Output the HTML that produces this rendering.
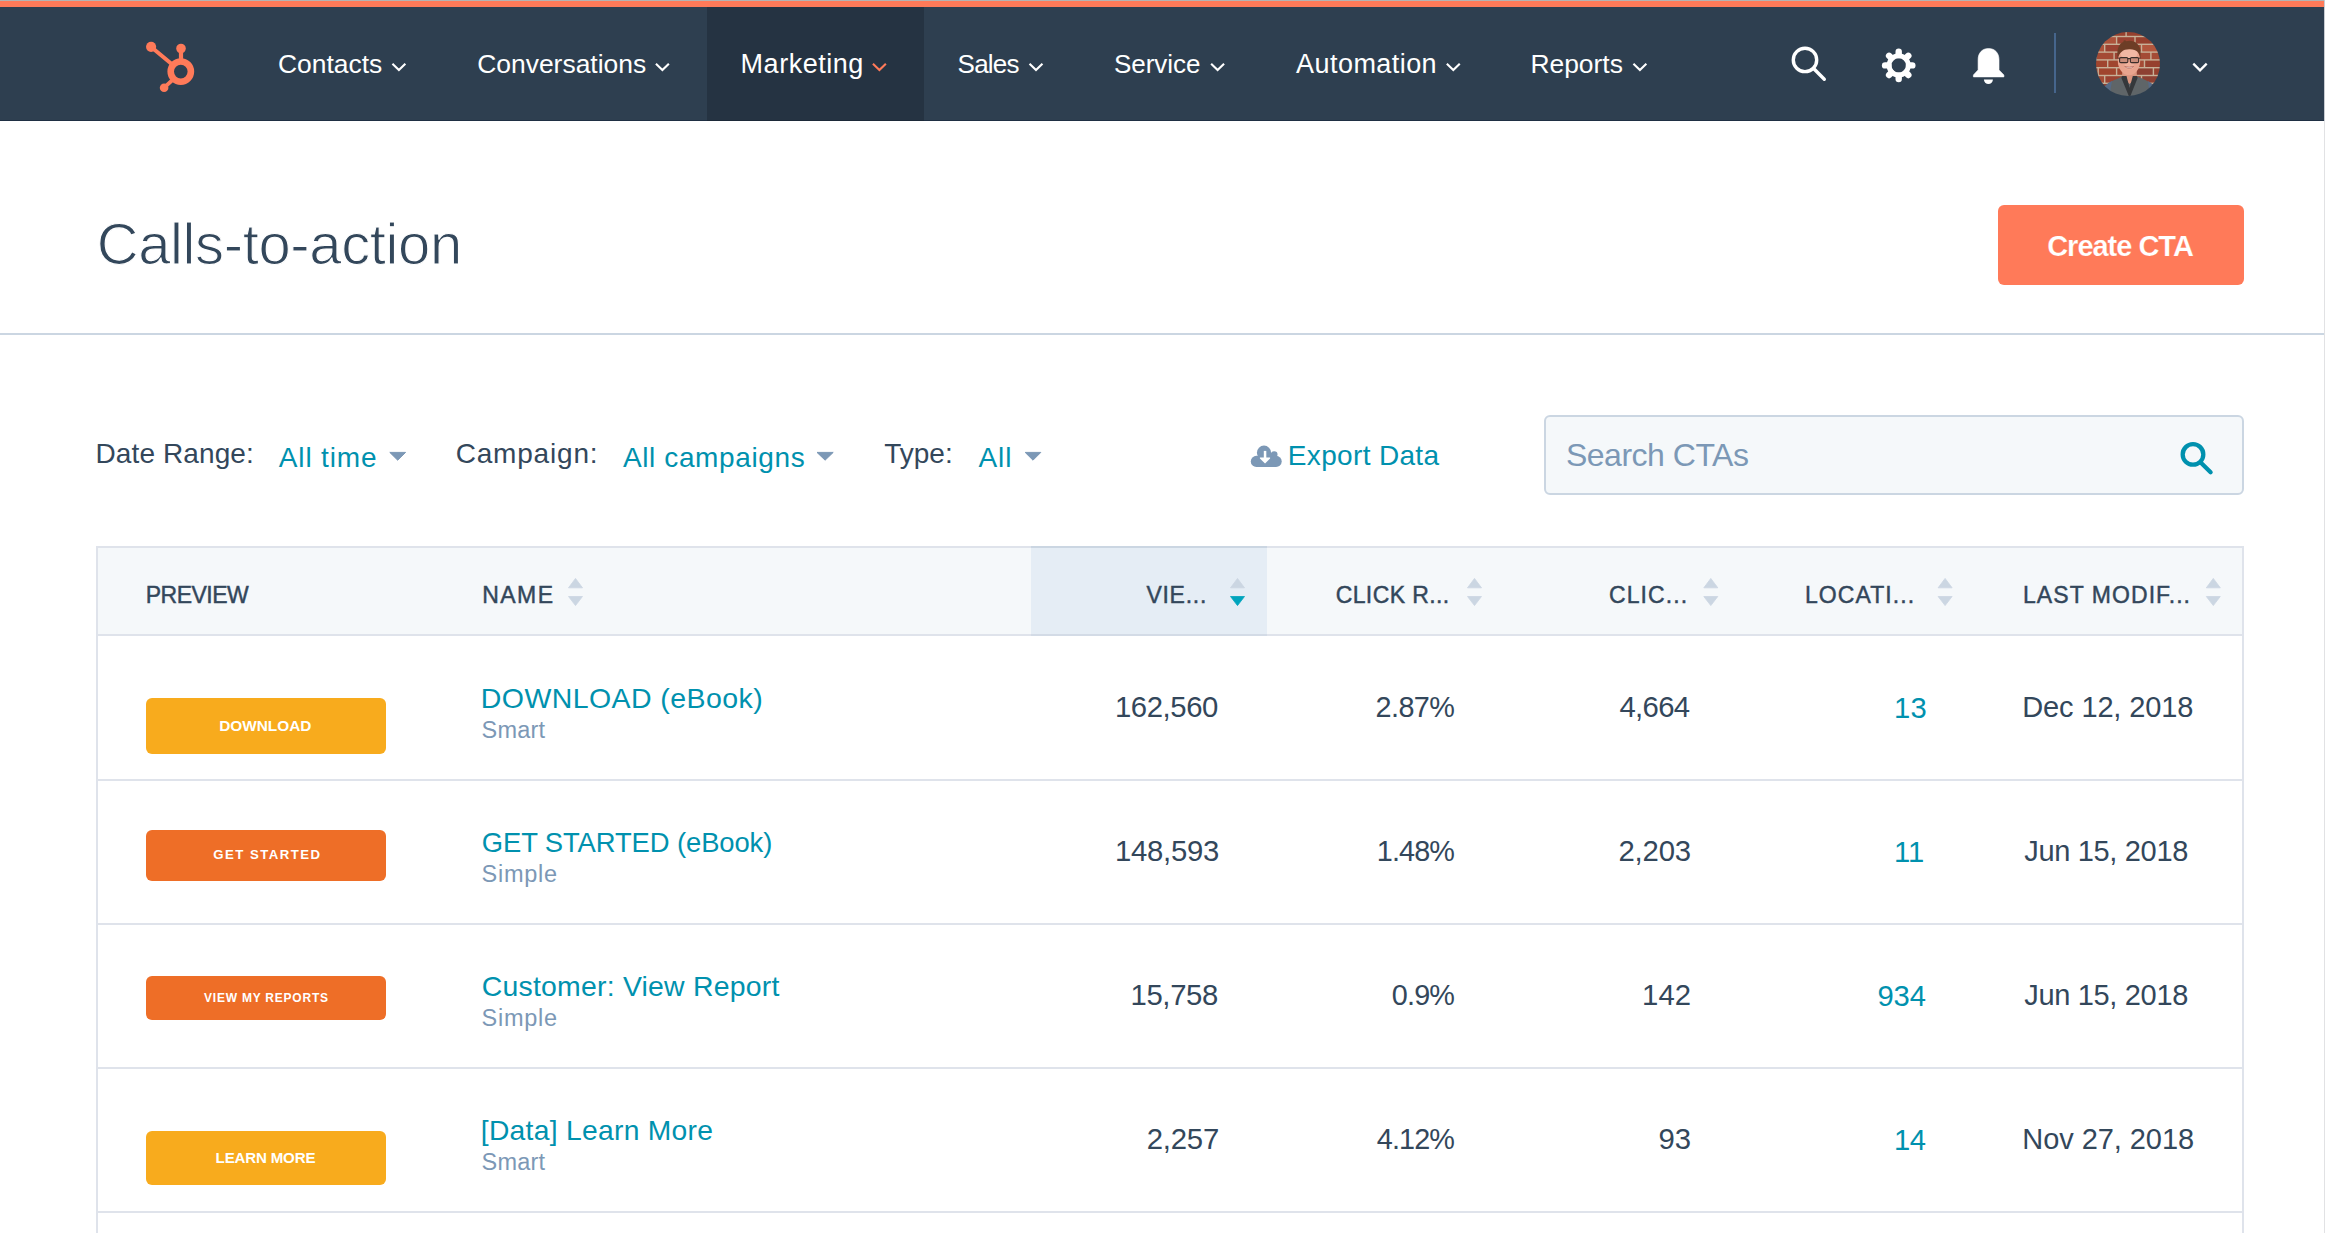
<!DOCTYPE html>
<html lang="en">
<head>
<meta charset="utf-8">
<title>Calls-to-action</title>
<style>
  html, body { margin: 0; padding: 0; }
  html { width: 2325px; height: 1233px; overflow: hidden; background: #ffffff; }
  body { width: 2325px; height: 1233px; overflow: hidden; background: #ffffff; position: relative;
         font-family: "Liberation Sans", sans-serif; color: #33475b; }
  .abs, .t, svg.ic { position: absolute; }
  .t { white-space: nowrap; line-height: 1; font-family: "Liberation Sans", sans-serif; }
  svg.ic { left: 0; top: 0; overflow: visible; pointer-events: none; }
  .topline { left: 0; top: 0; width: 2324px; height: 1px; background: #b4b4b4; }
  .accent { left: 0; top: 1px; width: 2324px; height: 6px; background: #ff7a59; }
  nav { position: absolute; left: 0; top: 7px; width: 2324px; height: 114px; background: #2e3f50; box-shadow: inset 0 -1px 0 #1f2f43; }
  nav .active { position: absolute; left: 707px; top: 0; width: 217px; height: 114px; background: #253342; box-shadow: inset 0 -1px 0 #1c2938; }
  .edge1 { left: 2324px; top: 0; width: 1px; height: 1233px; background: linear-gradient(#c8ccd2 0, #c8ccd2 121px, #e1e2e4 121px); }
  .hrule { left: 0; top: 333px; width: 2324px; height: 2px; background: #cbd6e2; }
  .btn-primary { left: 1998px; top: 205px; width: 246px; height: 80px; border-radius: 6px; background: #ff7a59; }
  .search { left: 1544px; top: 415px; width: 700px; height: 80px; box-sizing: border-box;
            border: 2px solid #cbd6e2; border-radius: 6px; background: #f5f8fa; }
  .table { left: 96px; top: 546px; width: 2148px; height: 687px; box-sizing: border-box;
           border: 2px solid #dfe3eb; border-bottom: 0; background: #ffffff; }
  .thead { left: 98px; top: 548px; width: 2144px; height: 86px; background: #f5f8fa; }
  .thead-sorted { left: 1031px; top: 548px; width: 236px; height: 86px; background: #e5edf5; }
  .thead-sorted-top { left: 1031px; top: 546px; width: 236px; height: 2px; background: #cbd6e2; }
  .thead-sorted-bottom { left: 1031px; top: 634px; width: 236px; height: 2px; background: #d3dbe6; z-index: 2; }
  .rowline { left: 98px; width: 2144px; height: 2px; background: #dfe3eb; }
  .cta { left: 146px; width: 240px; border-radius: 6px; }
  .cta.y { background: #f8ab1d; }
  .cta.o { background: #ee6e27; }
</style>
</head>
<body>

<header>
<!-- ===== top navigation ===== -->
<div class="abs topline"></div>
<div class="abs accent"></div>
<nav><div class="active"></div></nav>
<span class="t" style="left:278.00px;top:51.40px;font-size:26.42px;letter-spacing:-0.001px;color:#ffffff;">Contacts</span><span class="t" style="left:477.20px;top:51.40px;font-size:26.45px;letter-spacing:0.002px;color:#ffffff;">Conversations</span><span class="t" style="left:740.60px;top:51.40px;font-size:27.0px;letter-spacing:0.521px;color:#ffffff;">Marketing</span><span class="t" style="left:957.60px;top:51.40px;font-size:26.0px;letter-spacing:-0.810px;color:#ffffff;">Sales</span><span class="t" style="left:1114.00px;top:51.40px;font-size:26.0px;letter-spacing:-0.039px;color:#ffffff;">Service</span><span class="t" style="left:1296.10px;top:51.40px;font-size:27.0px;letter-spacing:0.437px;color:#ffffff;">Automation</span><span class="t" style="left:1530.40px;top:51.40px;font-size:26.43px;letter-spacing:-0.001px;color:#ffffff;">Reports</span>

<svg class="ic" width="2325" height="130" viewBox="0 0 2325 130">
  <!-- sprocket logo -->
  <g stroke="#ff7a59" fill="#ff7a59" stroke-linecap="round">
    <line x1="151.2" y1="47" x2="172.6" y2="64.8" stroke-width="4"/>
    <line x1="181" y1="49" x2="181" y2="60" stroke-width="4.2"/>
    <line x1="164.2" y1="87.6" x2="173" y2="79.5" stroke-width="3.8"/>
    <circle cx="151.1" cy="46.8" r="5.1" stroke="none"/>
    <circle cx="181" cy="48.5" r="4.8" stroke="none"/>
    <circle cx="164.1" cy="87.8" r="4.3" stroke="none"/>
    <circle cx="180.8" cy="71.6" r="10.1" fill="none" stroke-width="6.6"/>
  </g>
  <polyline points="392.44,63.64 398.90,70.10 405.36,63.64" fill="none" stroke="#ffffff" stroke-width="2.1" stroke-linecap="butt" stroke-linejoin="miter"/><polyline points="655.94,63.64 662.40,70.10 668.86,63.64" fill="none" stroke="#ffffff" stroke-width="2.1" stroke-linecap="butt" stroke-linejoin="miter"/><polyline points="1029.54,63.64 1036.00,70.10 1042.46,63.64" fill="none" stroke="#ffffff" stroke-width="2.1" stroke-linecap="butt" stroke-linejoin="miter"/><polyline points="1211.14,63.64 1217.60,70.10 1224.06,63.64" fill="none" stroke="#ffffff" stroke-width="2.1" stroke-linecap="butt" stroke-linejoin="miter"/><polyline points="1446.84,63.64 1453.30,70.10 1459.76,63.64" fill="none" stroke="#ffffff" stroke-width="2.1" stroke-linecap="butt" stroke-linejoin="miter"/><polyline points="1633.44,63.64 1639.90,70.10 1646.36,63.64" fill="none" stroke="#ffffff" stroke-width="2.1" stroke-linecap="butt" stroke-linejoin="miter"/><polyline points="872.94,63.64 879.40,70.10 885.86,63.64" fill="none" stroke="#ff7a59" stroke-width="2.1" stroke-linecap="butt" stroke-linejoin="miter"/><polyline points="2193.31,63.61 2200.00,70.30 2206.69,63.61" fill="none" stroke="#ffffff" stroke-width="2.3" stroke-linecap="butt" stroke-linejoin="miter"/>
  <!-- search -->
  <g stroke="#ffffff" fill="none" stroke-width="3.4" stroke-linecap="round">
    <circle cx="1805" cy="59.9" r="11.7"/>
    <line x1="1813.6" y1="68.5" x2="1824.3" y2="79.2"/>
  </g>
  <!-- settings gear -->
  <g transform="translate(1898.7 65.4)" stroke="#ffffff" fill="none">
    <circle cx="0" cy="0" r="9.6" stroke-width="4.9"/>
    <g stroke-width="6.4" stroke-linecap="round"><line x1="0" y1="-10.4" x2="0" y2="-13.6" transform="rotate(0)"/><line x1="0" y1="-10.4" x2="0" y2="-13.6" transform="rotate(45)"/><line x1="0" y1="-10.4" x2="0" y2="-13.6" transform="rotate(90)"/><line x1="0" y1="-10.4" x2="0" y2="-13.6" transform="rotate(135)"/><line x1="0" y1="-10.4" x2="0" y2="-13.6" transform="rotate(180)"/><line x1="0" y1="-10.4" x2="0" y2="-13.6" transform="rotate(225)"/><line x1="0" y1="-10.4" x2="0" y2="-13.6" transform="rotate(270)"/><line x1="0" y1="-10.4" x2="0" y2="-13.6" transform="rotate(315)"/></g>
  </g>
  <!-- bell -->
  <g fill="#ffffff">
    <path d="M1988.55 48.5 C1982.2 48.5 1978.1 53 1978.1 59.7 L1978.1 69.9 L1973.4 75 L1973.4 76.9 L2003.9 76.9 L2003.9 75 L1999 69.9 L1999 59.7 C1999 53 1994.9 48.5 1988.55 48.5 Z" stroke="#ffffff" stroke-width="0.6" stroke-linejoin="round"/>
    <path d="M1983.9 79.4 L1992.9 79.4 A4.5 4.7 0 0 1 1983.9 79.4 Z"/>
  </g>
  <rect x="2054" y="33" width="2" height="60" fill="#46658c"/>
  <!-- avatar -->
  <defs><clipPath id="av"><circle cx="2128" cy="64" r="32"/></clipPath><filter id="soft" x="-5%" y="-5%" width="110%" height="110%"><feGaussianBlur stdDeviation="0.45"/></filter></defs>
  <g clip-path="url(#av)">
    <g filter="url(#soft)">
      <rect x="2088" y="24" width="80" height="80" fill="#c7b097"/>
      <rect x="2090.0" y="29.4" width="17" height="6.4" fill="#96412f"/><rect x="2108.4" y="29.4" width="17" height="6.4" fill="#96412f"/><rect x="2126.8" y="29.4" width="17" height="6.4" fill="#96412f"/><rect x="2145.2" y="29.4" width="17" height="6.4" fill="#a0452f"/><rect x="2163.6" y="29.4" width="17" height="6.4" fill="#ad523b"/><rect x="2080.5" y="37.2" width="17" height="6.4" fill="#96412f"/><rect x="2098.9" y="37.2" width="17" height="6.4" fill="#ad523b"/><rect x="2117.3" y="37.2" width="17" height="6.4" fill="#9a4330"/><rect x="2135.7" y="37.2" width="17" height="6.4" fill="#96412f"/><rect x="2154.1" y="37.2" width="17" height="6.4" fill="#8d4032"/><rect x="2087.0" y="45.0" width="17" height="6.4" fill="#ad523b"/><rect x="2105.4" y="45.0" width="17" height="6.4" fill="#9a4330"/><rect x="2123.8" y="45.0" width="17" height="6.4" fill="#a44b36"/><rect x="2142.2" y="45.0" width="17" height="6.4" fill="#b2563d"/><rect x="2160.6" y="45.0" width="17" height="6.4" fill="#96412f"/><rect x="2078.0" y="52.8" width="17" height="6.4" fill="#ad523b"/><rect x="2096.4" y="52.8" width="17" height="6.4" fill="#a44b36"/><rect x="2114.8" y="52.8" width="17" height="6.4" fill="#9a4330"/><rect x="2133.2" y="52.8" width="17" height="6.4" fill="#a44b36"/><rect x="2151.6" y="52.8" width="17" height="6.4" fill="#a44b36"/><rect x="2090.0" y="60.6" width="17" height="6.4" fill="#a0452f"/><rect x="2108.4" y="60.6" width="17" height="6.4" fill="#a0452f"/><rect x="2126.8" y="60.6" width="17" height="6.4" fill="#a44b36"/><rect x="2145.2" y="60.6" width="17" height="6.4" fill="#96412f"/><rect x="2163.6" y="60.6" width="17" height="6.4" fill="#a84e37"/><rect x="2080.5" y="68.4" width="17" height="6.4" fill="#96412f"/><rect x="2098.9" y="68.4" width="17" height="6.4" fill="#a0452f"/><rect x="2117.3" y="68.4" width="17" height="6.4" fill="#a0452f"/><rect x="2135.7" y="68.4" width="17" height="6.4" fill="#8d4032"/><rect x="2154.1" y="68.4" width="17" height="6.4" fill="#96412f"/><rect x="2087.0" y="76.2" width="17" height="6.4" fill="#a44b36"/><rect x="2105.4" y="76.2" width="17" height="6.4" fill="#9a4330"/><rect x="2123.8" y="76.2" width="17" height="6.4" fill="#96412f"/><rect x="2142.2" y="76.2" width="17" height="6.4" fill="#8d4032"/><rect x="2160.6" y="76.2" width="17" height="6.4" fill="#b2563d"/><rect x="2078.0" y="84.0" width="17" height="6.4" fill="#9a4330"/><rect x="2096.4" y="84.0" width="17" height="6.4" fill="#8d4032"/><rect x="2114.8" y="84.0" width="17" height="6.4" fill="#a84e37"/><rect x="2133.2" y="84.0" width="17" height="6.4" fill="#a0452f"/><rect x="2151.6" y="84.0" width="17" height="6.4" fill="#8d4032"/><rect x="2090.0" y="91.8" width="17" height="6.4" fill="#a44b36"/><rect x="2108.4" y="91.8" width="17" height="6.4" fill="#9a4330"/><rect x="2126.8" y="91.8" width="17" height="6.4" fill="#9a4330"/><rect x="2145.2" y="91.8" width="17" height="6.4" fill="#b2563d"/><rect x="2163.6" y="91.8" width="17" height="6.4" fill="#9a4330"/>
      <!-- shoulders / shirt -->
      <path d="M2098 104 C2099 90 2106 82.5 2118 78.5 L2123 76 L2136 76 L2141 78 C2152 82 2158 90 2160 104 Z" fill="#5f6568"/>
      <path d="M2098 104 C2099 92 2104 85 2112 81 L2108 104 Z" fill="#566a86"/>
      <path d="M2160 104 C2159 92 2155 85 2148 81 L2151 104 Z" fill="#566a86"/>
      <!-- neck -->
      <path d="M2122.5 68 L2136.5 68 L2137 77 L2129.6 84 L2122 77 Z" fill="#d9957f"/>
      <path d="M2122 76 L2126.5 76 L2129.6 88 L2132.8 76 L2137 76 L2137.6 78 L2130.4 96 L2128.8 96 L2121.4 78 Z" fill="#34373b"/>
      <!-- head -->
      <ellipse cx="2129" cy="60.8" rx="11.2" ry="14.4" fill="#e8a48e"/>
      <ellipse cx="2129" cy="53.5" rx="8.6" ry="5.2" fill="#f1b8a4"/>
      <ellipse cx="2129.2" cy="66" rx="5" ry="3.4" fill="#efb19c"/>
      <!-- hair -->
      <path d="M2117.6 59 C2116.4 48 2119.5 43 2123.5 42 C2122.8 40.2 2125 39.4 2126.4 41.2 C2132 39.2 2140.6 42.6 2140.6 52 L2140.4 59 C2139.6 52.5 2137 49.6 2130 49.2 C2123.4 48.9 2119.4 52 2117.6 59 Z" fill="#6d3d27"/>
      <!-- glasses -->
      <g fill="rgba(60,40,36,0.18)" stroke="#3b2d2a" stroke-width="1.05">
        <rect x="2119.6" y="57.6" width="8.2" height="5" rx="1.2"/>
        <rect x="2130.4" y="57.6" width="8.2" height="5" rx="1.2"/>
        <path d="M2117.8 58 L2119.6 58.2 M2127.8 58.6 L2130.4 58.6 M2138.6 58.2 L2140.4 58"/>
      </g>
      <!-- smile -->
      <path d="M2124.6 66.4 Q2129.2 70.6 2133.8 66.4 Q2129.2 68 2124.6 66.4 Z" fill="#f6ebe6" stroke="#b5685a" stroke-width="0.7"/>
    </g>
  </g>
</svg>

</header>

<main>
<!-- ===== page header ===== -->
<h1 style="margin:0;font-weight:normal;font-size:0;line-height:0">
<span class="t" style="left:96.70px;top:215.30px;font-size:58px;letter-spacing:-0.373px;color:#33475b;-webkit-text-stroke:1.1px #ffffff;">Calls-to-action</span></h1>
<div class="abs btn-primary"></div>
<span class="t" style="left:2047.20px;top:231.50px;font-size:29px;letter-spacing:-1.015px;color:#ffffff;font-weight:700;-webkit-text-stroke:0.2px #ff7a59;">Create CTA</span>
<div class="abs hrule"></div>

<section aria-label="Filters">
<!-- ===== filter bar ===== -->
<span class="t" style="left:95.50px;top:439.90px;font-size:28px;letter-spacing:0.107px;color:#33475b;">Date Range:</span><span class="t" style="left:278.80px;top:444.00px;font-size:28px;letter-spacing:0.854px;color:#0091ae;">All time</span>
<span class="t" style="left:455.70px;top:439.90px;font-size:28px;letter-spacing:0.809px;color:#33475b;">Campaign:</span><span class="t" style="left:622.90px;top:444.00px;font-size:28px;letter-spacing:0.625px;color:#0091ae;">All campaigns</span>
<span class="t" style="left:884.30px;top:439.90px;font-size:28px;letter-spacing:-0.026px;color:#33475b;">Type:</span><span class="t" style="left:978.40px;top:444.00px;font-size:28px;letter-spacing:1.002px;color:#0091ae;">All</span>
<span class="t" style="left:1287.80px;top:442.40px;font-size:28px;letter-spacing:0.342px;color:#0091ae;">Export Data</span>
<div class="abs search"></div>
<span class="t" style="left:1565.90px;top:439.20px;font-size:32px;letter-spacing:-0.481px;color:#7c98b6;">Search CTAs</span>
<svg class="ic" width="2325" height="520" viewBox="0 0 2325 520">
  <path d="M389.8 452.4 L405.6 452.4 L397.7 460.2 Z" fill="#7c98b6" stroke="#7c98b6" stroke-width="1" stroke-linejoin="round"/>
  <path d="M817.0 452.4 L833.2 452.4 L825.1 460.2 Z" fill="#7c98b6" stroke="#7c98b6" stroke-width="1" stroke-linejoin="round"/>
  <path d="M1025.2 452.4 L1040.8 452.4 L1033.0 460.2 Z" fill="#7c98b6" stroke="#7c98b6" stroke-width="1" stroke-linejoin="round"/>
  <!-- export cloud -->
  <g fill="#7c98b6">
    <circle cx="1264" cy="452.7" r="7.1"/>
    <circle cx="1274.2" cy="454.6" r="3.3"/>
    <rect x="1250.8" y="455.8" width="30.9" height="11.2" rx="5.6"/>
    <rect x="1262" y="453" width="14" height="6"/>
  </g>
  <g fill="#ffffff">
    <rect x="1263.8" y="450.9" width="2.5" height="7.5"/>
    <path d="M1259.9 457.4 L1270.1 457.4 L1270.1 458.6 L1265.05 463.5 L1259.9 458.6 Z"/>
  </g>
  <!-- search icon -->
  <g stroke="#0091ae" fill="none" stroke-width="4.3" stroke-linecap="round">
    <circle cx="2193" cy="454.4" r="10.3"/>
    <line x1="2201.2" y1="463" x2="2210.6" y2="472.2"/>
  </g>
</svg>

</section>

<section aria-label="Calls-to-action table">
<!-- ===== table ===== -->
<div class="abs table"></div>
<div class="abs thead"></div>
<div class="abs thead-sorted"></div>
<div class="abs thead-sorted-top"></div>
<div class="abs thead-sorted-bottom"></div>
<div class="abs rowline" style="top:634px"></div>
<div class="abs rowline" style="top:779px"></div>
<div class="abs rowline" style="top:923px"></div>
<div class="abs rowline" style="top:1067px"></div>
<div class="abs rowline" style="top:1211px"></div>
<span class="t" style="left:145.80px;top:584.10px;font-size:23px;letter-spacing:-0.527px;color:#33475b;-webkit-text-stroke:0.45px #33475b;">PREVIEW</span><span class="t" style="left:482.30px;top:584.10px;font-size:23px;letter-spacing:1.430px;color:#33475b;-webkit-text-stroke:0.45px #33475b;">NAME</span><span class="t" style="left:1146.40px;top:584.10px;font-size:23px;letter-spacing:0.750px;color:#33475b;-webkit-text-stroke:0.45px #33475b;">VIE...</span><span class="t" style="left:1335.70px;top:584.10px;font-size:23px;letter-spacing:0.386px;color:#33475b;-webkit-text-stroke:0.45px #33475b;">CLICK R...</span><span class="t" style="left:1609.00px;top:584.10px;font-size:23px;letter-spacing:1.086px;color:#33475b;-webkit-text-stroke:0.45px #33475b;">CLIC...</span><span class="t" style="left:1805.00px;top:584.10px;font-size:23px;letter-spacing:1.069px;color:#33475b;-webkit-text-stroke:0.45px #33475b;">LOCATI...</span><span class="t" style="left:2023.00px;top:584.10px;font-size:23px;letter-spacing:1.063px;color:#33475b;-webkit-text-stroke:0.45px #33475b;">LAST MODIF...</span>
<svg class="ic" width="2325" height="640" viewBox="0 0 2325 640">
  <path d="M575.5 578.4 L582.5 587.8 L568.5 587.8 Z" fill="#cbd6e2" stroke="#cbd6e2" stroke-width="0.8" stroke-linejoin="round"/><path d="M568.5 596.5 L582.5 596.5 L575.5 605.6 Z" fill="#cbd6e2" stroke="#cbd6e2" stroke-width="0.8" stroke-linejoin="round"/><path d="M1237.5 578.4 L1244.5 587.8 L1230.5 587.8 Z" fill="#cbd6e2" stroke="#cbd6e2" stroke-width="0.8" stroke-linejoin="round"/><path d="M1230.5 596.5 L1244.5 596.5 L1237.5 605.6 Z" fill="#00a4bd" stroke="#00a4bd" stroke-width="0.8" stroke-linejoin="round"/><path d="M1474.5 578.4 L1481.5 587.8 L1467.5 587.8 Z" fill="#cbd6e2" stroke="#cbd6e2" stroke-width="0.8" stroke-linejoin="round"/><path d="M1467.5 596.5 L1481.5 596.5 L1474.5 605.6 Z" fill="#cbd6e2" stroke="#cbd6e2" stroke-width="0.8" stroke-linejoin="round"/><path d="M1710.8 578.4 L1717.8 587.8 L1703.8 587.8 Z" fill="#cbd6e2" stroke="#cbd6e2" stroke-width="0.8" stroke-linejoin="round"/><path d="M1703.8 596.5 L1717.8 596.5 L1710.8 605.6 Z" fill="#cbd6e2" stroke="#cbd6e2" stroke-width="0.8" stroke-linejoin="round"/><path d="M1945.1 578.4 L1952.1 587.8 L1938.1 587.8 Z" fill="#cbd6e2" stroke="#cbd6e2" stroke-width="0.8" stroke-linejoin="round"/><path d="M1938.1 596.5 L1952.1 596.5 L1945.1 605.6 Z" fill="#cbd6e2" stroke="#cbd6e2" stroke-width="0.8" stroke-linejoin="round"/><path d="M2213.3 578.4 L2220.3 587.8 L2206.3 587.8 Z" fill="#cbd6e2" stroke="#cbd6e2" stroke-width="0.8" stroke-linejoin="round"/><path d="M2206.3 596.5 L2220.3 596.5 L2213.3 605.6 Z" fill="#cbd6e2" stroke="#cbd6e2" stroke-width="0.8" stroke-linejoin="round"/>
</svg>

<!-- row 1 -->
<div class="abs cta y" style="top:698px;height:56px"></div><span class="t" style="left:219.30px;top:718.00px;font-size:15.4px;letter-spacing:-0.045px;color:#ffffff;font-weight:700;">DOWNLOAD</span>
<span class="t" style="left:480.80px;top:684.20px;font-size:28.5px;letter-spacing:0.423px;color:#0091ae;">DOWNLOAD (eBook)</span><span class="t" style="left:481.50px;top:718.90px;font-size:23.5px;letter-spacing:0.239px;color:#7c98b6;">Smart</span><span class="t" style="left:1115.00px;top:691.90px;font-size:29.3px;letter-spacing:-0.435px;color:#33475b;">162,560</span><span class="t" style="left:1375.50px;top:692.90px;font-size:28.8px;letter-spacing:-0.562px;color:#33475b;">2.87%</span><span class="t" style="left:1619.50px;top:691.90px;font-size:29.3px;letter-spacing:-0.680px;color:#33475b;">4,664</span><span class="t" style="left:1894.00px;top:694.30px;font-size:29.2px;letter-spacing:0.267px;color:#0091ae;">13</span><span class="t" style="left:2022.30px;top:692.80px;font-size:29px;letter-spacing:-0.135px;color:#33475b;">Dec 12, 2018</span>
<!-- row 2 -->
<div class="abs cta o" style="top:830px;height:50.5px"></div><span class="t" style="left:213.30px;top:848.30px;font-size:13.2px;letter-spacing:1.466px;color:#ffffff;font-weight:700;">GET STARTED</span>
<span class="t" style="left:481.80px;top:829.20px;font-size:27.4px;letter-spacing:-0.095px;color:#0091ae;">GET STARTED (eBook)</span><span class="t" style="left:481.50px;top:862.90px;font-size:23.5px;letter-spacing:0.748px;color:#7c98b6;">Simple</span><span class="t" style="left:1115.00px;top:835.90px;font-size:29.3px;letter-spacing:-0.268px;color:#33475b;">148,593</span><span class="t" style="left:1376.80px;top:836.90px;font-size:28.8px;letter-spacing:-0.887px;color:#33475b;">1.48%</span><span class="t" style="left:1618.50px;top:835.90px;font-size:29.3px;letter-spacing:-0.180px;color:#33475b;">2,203</span><span class="t" style="left:1894.00px;top:838.30px;font-size:29.2px;letter-spacing:-0.066px;color:#0091ae;">11</span><span class="t" style="left:2024.30px;top:836.80px;font-size:29px;letter-spacing:-0.334px;color:#33475b;">Jun 15, 2018</span>
<!-- row 3 -->
<div class="abs cta o" style="top:976px;height:44px"></div><span class="t" style="left:204.10px;top:991.60px;font-size:12px;letter-spacing:0.769px;color:#ffffff;font-weight:700;">VIEW MY REPORTS</span>
<span class="t" style="left:481.80px;top:972.20px;font-size:28.42px;letter-spacing:0.219px;color:#0091ae;">Customer: View Report</span><span class="t" style="left:481.50px;top:1006.90px;font-size:23.5px;letter-spacing:0.748px;color:#7c98b6;">Simple</span><span class="t" style="left:1130.50px;top:979.90px;font-size:29.3px;letter-spacing:-0.363px;color:#33475b;">15,758</span><span class="t" style="left:1391.80px;top:980.90px;font-size:28.8px;letter-spacing:-0.844px;color:#33475b;">0.9%</span><span class="t" style="left:1642.00px;top:979.90px;font-size:29.3px;letter-spacing:0.106px;color:#33475b;">142</span><span class="t" style="left:1877.40px;top:982.30px;font-size:29.2px;letter-spacing:-0.083px;color:#0091ae;">934</span><span class="t" style="left:2024.30px;top:980.80px;font-size:29px;letter-spacing:-0.334px;color:#33475b;">Jun 15, 2018</span>
<!-- row 4 -->
<div class="abs cta y" style="top:1131px;height:54px"></div><span class="t" style="left:215.60px;top:1150.00px;font-size:15.1px;letter-spacing:-0.177px;color:#ffffff;font-weight:700;">LEARN MORE</span>
<span class="t" style="left:480.80px;top:1116.20px;font-size:28.24px;letter-spacing:0.290px;color:#0091ae;">[Data] Learn More</span><span class="t" style="left:481.50px;top:1150.90px;font-size:23.5px;letter-spacing:0.239px;color:#7c98b6;">Smart</span><span class="t" style="left:1146.70px;top:1123.90px;font-size:29.3px;letter-spacing:-0.180px;color:#33475b;">2,257</span><span class="t" style="left:1376.80px;top:1124.90px;font-size:28.8px;letter-spacing:-0.887px;color:#33475b;">4.12%</span><span class="t" style="left:1658.60px;top:1123.90px;font-size:29.3px;letter-spacing:-0.094px;color:#33475b;">93</span><span class="t" style="left:1894.00px;top:1126.30px;font-size:29.2px;letter-spacing:-0.533px;color:#0091ae;">14</span><span class="t" style="left:2022.30px;top:1124.80px;font-size:29px;letter-spacing:-0.062px;color:#33475b;">Nov 27, 2018</span>

</section>
</main>
<div class="abs edge1"></div>
</body>
</html>
